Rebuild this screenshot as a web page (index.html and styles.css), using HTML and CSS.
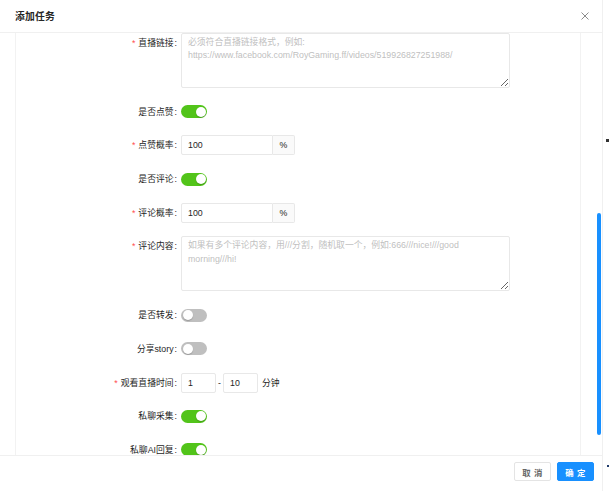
FILE: index.html
```html
<!DOCTYPE html>
<html lang="zh-CN">
<head>
<meta charset="utf-8">
<title>添加任务</title>
<link rel="stylesheet" href="styles.css">
</head>
<body>
<div class="modal">
  <div class="modal-header">
    <div class="modal-title">添加任务</div>
    <svg class="close" width="8" height="8" viewBox="0 0 8 8"><path d="M0.5 0.5 L7.5 7.5 M7.5 0.5 L0.5 7.5" stroke="#8c8c8c" stroke-width="1" fill="none"/></svg>
  </div>
  <div class="modal-body">
    <div class="form">
      <div class="row row-tall">
        <label class="label req">直播链接</label>
        <textarea class="textarea" placeholder="必须符合直播链接格式，例如:&#10;https://www.facebook.com/RoyGaming.ff/videos/519926827251988/"></textarea>
      </div>
      <div class="row">
        <label class="label">是否点赞</label>
        <span class="switch on"><span class="knob"></span></span>
      </div>
      <div class="row">
        <label class="label req">点赞概率</label>
        <div class="input-group">
          <input class="input" value="100">
          <span class="addon">%</span>
        </div>
      </div>
      <div class="row">
        <label class="label">是否评论</label>
        <span class="switch on"><span class="knob"></span></span>
      </div>
      <div class="row">
        <label class="label req">评论概率</label>
        <div class="input-group">
          <input class="input" value="100">
          <span class="addon">%</span>
        </div>
      </div>
      <div class="row row-tall">
        <label class="label req">评论内容</label>
        <textarea class="textarea" placeholder="如果有多个评论内容，用///分割，随机取一个，例如:666///nice!///good&#10;morning///hi!"></textarea>
      </div>
      <div class="row">
        <label class="label">是否转发</label>
        <span class="switch"><span class="knob"></span></span>
      </div>
      <div class="row">
        <label class="label">分享story</label>
        <span class="switch"><span class="knob"></span></span>
      </div>
      <div class="row">
        <label class="label req">观看直播时间</label>
        <div class="range">
          <input class="input small" value="1">
          <span class="dash">-</span>
          <input class="input small" value="10">
          <span class="unit">分钟</span>
        </div>
      </div>
      <div class="row">
        <label class="label">私聊采集</label>
        <span class="switch on"><span class="knob"></span></span>
      </div>
      <div class="row">
        <label class="label">私聊AI回复</label>
        <span class="switch on"><span class="knob"></span></span>
      </div>
    </div>
    <div class="scrollbar"></div>
  </div>
  <div class="modal-footer">
    <button class="btn">取 消</button>
    <button class="btn primary">确 定</button>
  </div>
</div>
<span class="mark mark-a"></span>
<span class="mark mark-b"></span>
</body>
</html>
```

FILE: styles.css
```css
* { box-sizing: border-box; }
html, body { margin: 0; padding: 0; background: #fff; }
body {
  width: 612px;
  height: 491px;
  overflow: hidden;
  position: relative;
  font-family: "Liberation Sans", "Noto Sans CJK SC", sans-serif;
  font-size: 8.8px;
  color: #262626;
}
.modal {
  width: 603px;
  height: 491px;
  display: flex;
  flex-direction: column;
  border-right: 1px solid #f0f0f0;
  background: #fff;
}
.modal-header {
  height: 33px;
  flex: none;
  display: flex;
  align-items: center;
  justify-content: space-between;
  padding: 0 13px 0 15px;
  border-bottom: 1px solid #f0f0f0;
}
.modal-title {
  font-size: 9.8px;
  font-weight: 700;
  color: #262626;
  letter-spacing: 0.2px;
}
.close { display: block; }
.modal-body {
  flex: 1;
  position: relative;
  overflow: hidden;
  padding: 0 21px 0 15px;
}
.form {
  height: 100%;
  border-left: 1px solid #f2f2f2;
  border-right: 1px solid #f2f2f2;
  display: flex;
  flex-direction: column;
  gap: 13.7px;
}
.row {
  display: flex;
  align-items: flex-start;
  flex: none;
  min-height: 20px;
}
.label {
  width: 165px;
  flex: none;
  height: 20px;
  line-height: 20px;
  text-align: right;
  padding-right: 4px;
  color: #262626;
  white-space: nowrap;
}
.label::after {
  content: ":";
  margin-left: 1px;
}
.label.req::before {
  content: "*";
  color: #ff4d4f;
  margin-right: 3px;
}
.textarea {
  width: 329px;
  height: 55px;
  border: 1px solid #e8e8e8;
  border-radius: 2px;
  padding: 2px 6px;
  font-family: inherit;
  font-size: 8.8px;
  line-height: 13.2px;
  color: #262626;
  resize: vertical;
  outline: none;
  overflow: hidden;
  display: block;
  margin: 0;
}
.textarea::placeholder { color: #bfbfbf; }
.switch {
  margin-top: 3.5px;
  width: 26px;
  height: 13px;
  border-radius: 7px;
  background: #bfbfbf;
  position: relative;
  display: block;
}
.switch .knob {
  position: absolute;
  top: 1.5px;
  left: 1.5px;
  width: 10px;
  height: 10px;
  border-radius: 50%;
  background: #fff;
  box-shadow: 0 1px 1px rgba(0,0,0,0.2);
}
.switch.on { background: #52c41a; }
.switch.on .knob { left: 14.5px; }
.input-group {
  display: flex;
  width: 114px;
  height: 20px;
}
.input {
  height: 20px;
  border: 1px solid #e8e8e8;
  border-radius: 2px;
  padding: 0 6px;
  font-family: inherit;
  font-size: 8.8px;
  color: #262626;
  outline: none;
  margin: 0;
  background: #fff;
}
.input-group .input {
  flex: 1;
  min-width: 0;
  border-radius: 2px 0 0 2px;
}
.addon {
  width: 22px;
  flex: none;
  border: 1px solid #e8e8e8;
  border-left: none;
  border-radius: 0 2px 2px 0;
  background: #fafafa;
  display: flex;
  align-items: center;
  justify-content: center;
  color: #262626;
}
.range {
  display: flex;
  align-items: center;
  height: 20px;
}
.input.small { width: 35px; }
.dash { width: 7px; text-align: center; color: #262626; }
.unit { margin-left: 4px; color: #262626; }
.scrollbar {
  position: absolute;
  right: 1px;
  top: 180px;
  width: 4px;
  height: 222px;
  border-radius: 2px;
  background: #1890ff;
}
.modal-footer {
  height: 36px;
  flex: none;
  border-top: 1px solid #f0f0f0;
  display: flex;
  justify-content: flex-end;
  align-items: flex-start;
  gap: 6px;
  padding: 6px 8px 0 0;
}
.btn {
  width: 37px;
  height: 19px;
  border: 1px solid #e4e4e4;
  border-radius: 2px;
  background: #fff;
  color: #666;
  font-family: inherit;
  font-size: 8.4px;
  font-weight: 700;
  letter-spacing: 0.5px;
  padding: 0;
  margin: 0;
}
.btn.primary {
  background: #1890ff;
  border-color: #1890ff;
  color: #fff;
}
.mark {
  position: absolute;
  background: #333;
}
.mark-a { left: 606px; top: 139px; width: 3px; height: 3px; }
.mark-b { left: 607px; top: 465px; width: 2px; height: 2px; background: #1f3b6b; }
```
